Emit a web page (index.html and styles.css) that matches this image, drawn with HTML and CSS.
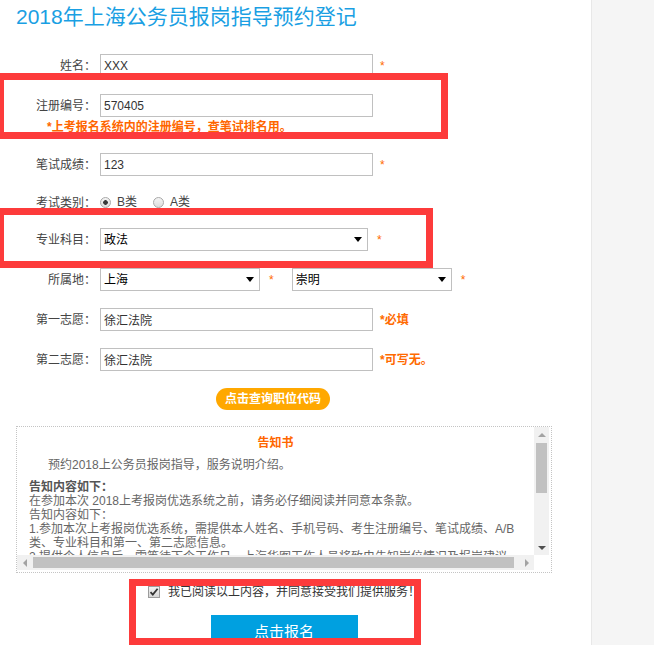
FILE: index.html
```html
<!DOCTYPE html>
<html lang="zh-CN">
<head>
<meta charset="utf-8">
<title>2018年上海公务员报岗指导预约登记</title>
<link rel="stylesheet" href="styles.css">
</head>
<body>
<div class="layout">
  <main class="main">
    <h1 class="title">2018年上海公务员报岗指导预约登记</h1>
    <form class="form">
      <div class="row row-first">
        <label class="label">姓名<span class="colon">：</span></label>
        <input class="field" type="text" value="XXX">
        <span class="star">*</span>
      </div>
      <div class="row">
        <label class="label">注册编号<span class="colon">：</span></label>
        <input class="field" type="text" value="570405">
      </div>
      <p class="hint">*上考报名系统内的注册编号，查笔试排名用。</p>
      <div class="row row-score">
        <label class="label">笔试成绩<span class="colon">：</span></label>
        <input class="field" type="text" value="123">
        <span class="star">*</span>
      </div>
      <div class="row row-radio">
        <span class="label">考试类别<span class="colon">：</span></span>
        <input class="radio radio-b" type="radio" name="kind" checked>
        <span class="radio-text">B类</span>
        <input class="radio radio-a" type="radio" name="kind">
        <span class="radio-text">A类</span>
      </div>
      <div class="row row-major">
        <label class="label">专业科目<span class="colon">：</span></label>
        <span class="select w-major"><select><option>政法</option></select></span>
        <span class="star star-sel">*</span>
      </div>
      <div class="row">
        <label class="label">所属地<span class="colon">：</span></label>
        <span class="select w-area"><select><option>上海</option></select></span>
        <span class="star star-sel">*</span>
        <span class="select w-area select-second"><select><option>崇明</option></select></span>
        <span class="star star-sel">*</span>
      </div>
      <div class="row">
        <label class="label">第一志愿<span class="colon">：</span></label>
        <input class="field" type="text" value="徐汇法院">
        <span class="note">*必填</span>
      </div>
      <div class="row">
        <label class="label">第二志愿<span class="colon">：</span></label>
        <input class="field" type="text" value="徐汇法院">
        <span class="note">*可写无。</span>
      </div>
      <button class="query" type="button">点击查询职位代码</button>

      <div class="notice">
        <div class="scroll">
          <div class="content">
            <p class="notice-title">告知书</p>
            <p class="intro">预约2018上公务员报岗指导，服务说明介绍。</p>
            <p class="body"><b>告知内容如下：</b><br>在参加本次 2018上考报岗优选系统之前，请务必仔细阅读并同意本条款。<br>告知内容如下：<br>1.参加本次上考报岗优选系统，需提供本人姓名、手机号码、考生注册编号、笔试成绩、A/B类、专业科目和第一、第二志愿信息。<br>2.提供个人信息后，需等待下个工作日，上海华图工作人员将致电告知岗位情况及报岗建议。</p>
          </div>
          <div class="vbar">
            <span class="sb-btn arr-up"></span>
            <span class="vtrack"><span class="vthumb"></span></span>
            <span class="sb-btn arr-down"></span>
          </div>
          <div class="hbar">
            <span class="sb-btn arr-left"></span>
            <span class="htrack"><span class="hthumb"></span></span>
            <span class="sb-btn arr-right"></span>
          </div>
          <div class="corner"></div>
        </div>
      </div>

      <div class="actions">
        <div class="agree">
          <span class="cbox"><svg width="10" height="10" viewBox="0 0 10 10"><path d="M1.5 5.2 L3.8 7.6 L8.6 1.8" fill="none" stroke="#333" stroke-width="1.8"/></svg></span>
          <span>我已阅读以上内容，并同意接受我们提供服务！</span>
        </div>
        <button class="submit" type="button">点击报名</button>
      </div>
    </form>
  </main>
  <aside class="side"></aside>

  <div class="mark mark-1"></div>
  <div class="mark mark-2"></div>
  <div class="mark mark-3"></div>
</div>
</body>
</html>
```

FILE: styles.css
```css
* { box-sizing: border-box; }
html, body { margin: 0; padding: 0; overflow: hidden; }
body {
  font-family: "Liberation Sans", "Noto Sans CJK SC", sans-serif;
  font-size: 12px;
  color: #444;
  background: #fff;
}
.layout {
  position: relative;
  display: flex;
  height: 645px;
  overflow: hidden;
}
.main {
  width: 591px;
  flex: none;
  padding-left: 16px;
  background: #fff;
}
.side {
  flex: 1;
  background: #f5f5f5;
  border-left: 1px solid #e8e8e8;
}
.title {
  margin: 0;
  font-size: 21px;
  line-height: 34px;
  font-weight: normal;
  color: #1a9fe3;
}
.form { padding-top: 20px; }
.row {
  display: flex;
  align-items: center;
  height: 23px;
  margin-top: 17px;
}
.row-first { margin-top: 0; }
.row-score { margin-top: 19px; }
.row-radio { margin-top: 15px; }
.row-major { margin-top: 14px; }
.label {
  width: 80px;
  flex: none;
  text-align: right;
  line-height: 23px;
  color: #444;
}
.colon { font-family: "Noto Sans CJK TC", "Noto Sans CJK SC", sans-serif; }
.field {
  margin-left: 4px;
  width: 273px;
  height: 23px;
  border: 1px solid #c0c0c0;
  padding: 0 3px;
  font: 12px "Liberation Sans", "Noto Sans CJK SC", sans-serif;
  color: #333;
  background: #fff;
  outline: none;
  border-radius: 0;
}
.star {
  margin-left: 7px;
  color: #ff6a00;
  line-height: 14px;
}
.star-sel { margin-left: 9px; }
.note {
  margin-left: 7px;
  color: #ff6a00;
  font-weight: bold;
  line-height: 14px;
}
.hint {
  margin: 3px 0 0 31px;
  line-height: 14px;
  font-weight: bold;
  color: #ff6600;
}
.radio {
  -webkit-appearance: none;
  appearance: none;
  width: 11px;
  height: 11px;
  margin: 0;
  border: 1px solid #a9a9a9;
  border-radius: 50%;
  background: linear-gradient(#f4f4f4, #dcdcdc);
  flex: none;
}
.radio:checked {
  background: radial-gradient(circle, #3a3a3a 0 2px, transparent 2.6px), linear-gradient(#f4f4f4, #dcdcdc);
}
.radio-b { margin-left: 4px; }
.radio-a { margin-left: 16px; }
.radio-text { margin-left: 6px; color: #444; line-height: 14px; margin-top: -1px; }
.select {
  position: relative;
  margin-left: 4px;
  height: 23px;
  flex: none;
}
.select select {
  -webkit-appearance: none;
  appearance: none;
  width: 100%;
  height: 23px;
  border: 1px solid #c0c0c0;
  border-radius: 0;
  background: #fff;
  padding: 0 3px;
  font: 12px "Liberation Sans", "Noto Sans CJK SC", sans-serif;
  color: #000;
  outline: none;
}
.select::after {
  content: "";
  position: absolute;
  right: 6px;
  top: 9px;
  border-left: 4px solid transparent;
  border-right: 4px solid transparent;
  border-top: 5px solid #000;
  pointer-events: none;
}
.w-major { width: 268px; }
.w-area { width: 160px; }
.select-second { margin-left: 18px; }
.query {
  display: block;
  margin: 17px 0 0 200px;
  width: 114px;
  height: 22px;
  border: 0;
  border-radius: 11px;
  padding: 0;
  background: #ffa800;
  color: #fff;
  font: bold 12px "Liberation Sans", "Noto Sans CJK SC", sans-serif;
  line-height: 22px;
}
.notice {
  margin-top: 16px;
  width: 536px;
  height: 147px;
  border: 1px dotted #c4c4c4;
  padding: 0 2px 2px 0;
}
.scroll {
  display: grid;
  grid-template-columns: 517px 15px;
  grid-template-rows: 128px 15px;
}
.content {
  overflow: hidden;
  padding: 8px 12px 0 12px;
  color: #666;
  line-height: 14px;
}
.content p { margin: 0; }
.content .notice-title {
  text-align: center;
  color: #ff6600;
  font-weight: bold;
  line-height: 16px;
}
.content .intro { margin-top: 7px; text-indent: 19px; }
.content .body { margin-top: 8px; }
.content b { color: #555; }
.vbar {
  background: #f1f1f1;
  display: flex;
  flex-direction: column;
}
.hbar {
  background: #f1f1f1;
  display: flex;
}
.corner { background: #fff; }
.sb-btn {
  width: 15px;
  height: 15px;
  flex: none;
  display: flex;
  align-items: center;
  justify-content: center;
}
.sb-btn::before { content: ""; display: block; }
.arr-up::before {
  border-left: 4px solid transparent;
  border-right: 4px solid transparent;
  border-bottom: 4px solid #a3a3a3;
}
.arr-down::before {
  border-left: 4px solid transparent;
  border-right: 4px solid transparent;
  border-top: 4px solid #505050;
}
.arr-left::before {
  border-top: 4px solid transparent;
  border-bottom: 4px solid transparent;
  border-right: 4px solid #a3a3a3;
}
.arr-right::before {
  border-top: 4px solid transparent;
  border-bottom: 4px solid transparent;
  border-left: 4px solid #a3a3a3;
}
.vtrack { flex: 1; padding: 1px 2px 0; display: block; }
.vthumb { display: block; height: 50px; background: #c1c1c1; }
.htrack { flex: 1; padding: 2px 0 2px 1px; display: block; }
.hthumb { display: block; width: 481px; height: 11px; background: #c1c1c1; }
.actions { width: 536px; }
.agree {
  margin-top: 11px;
  height: 16px;
  display: flex;
  align-items: center;
  justify-content: center;
  color: #333;
  line-height: 16px;
}
.cbox {
  width: 12px;
  height: 12px;
  margin-right: 8px;
  border: 1px solid #9c9c9c;
  background: linear-gradient(#f2f2f2, #d6d6d6);
  display: flex;
  align-items: center;
  justify-content: center;
  flex: none;
}
.submit {
  display: block;
  margin: 15px auto 0;
  width: 147px;
  height: 34px;
  border: 0;
  padding: 0;
  background: #00a0e0;
  color: #fff;
  font: 15px "Liberation Sans", "Noto Sans CJK SC", sans-serif;
  line-height: 34px;
}
.mark {
  position: absolute;
  border: 7px solid #fd3b3b;
  pointer-events: none;
}
.mark-1 { left: -3px; top: 73px; width: 451px; height: 66px; }
.mark-2 { left: -3px; top: 208px; width: 436px; height: 60px; }
.mark-3 { left: 129px; top: 579px; width: 292px; height: 66px; }
```
